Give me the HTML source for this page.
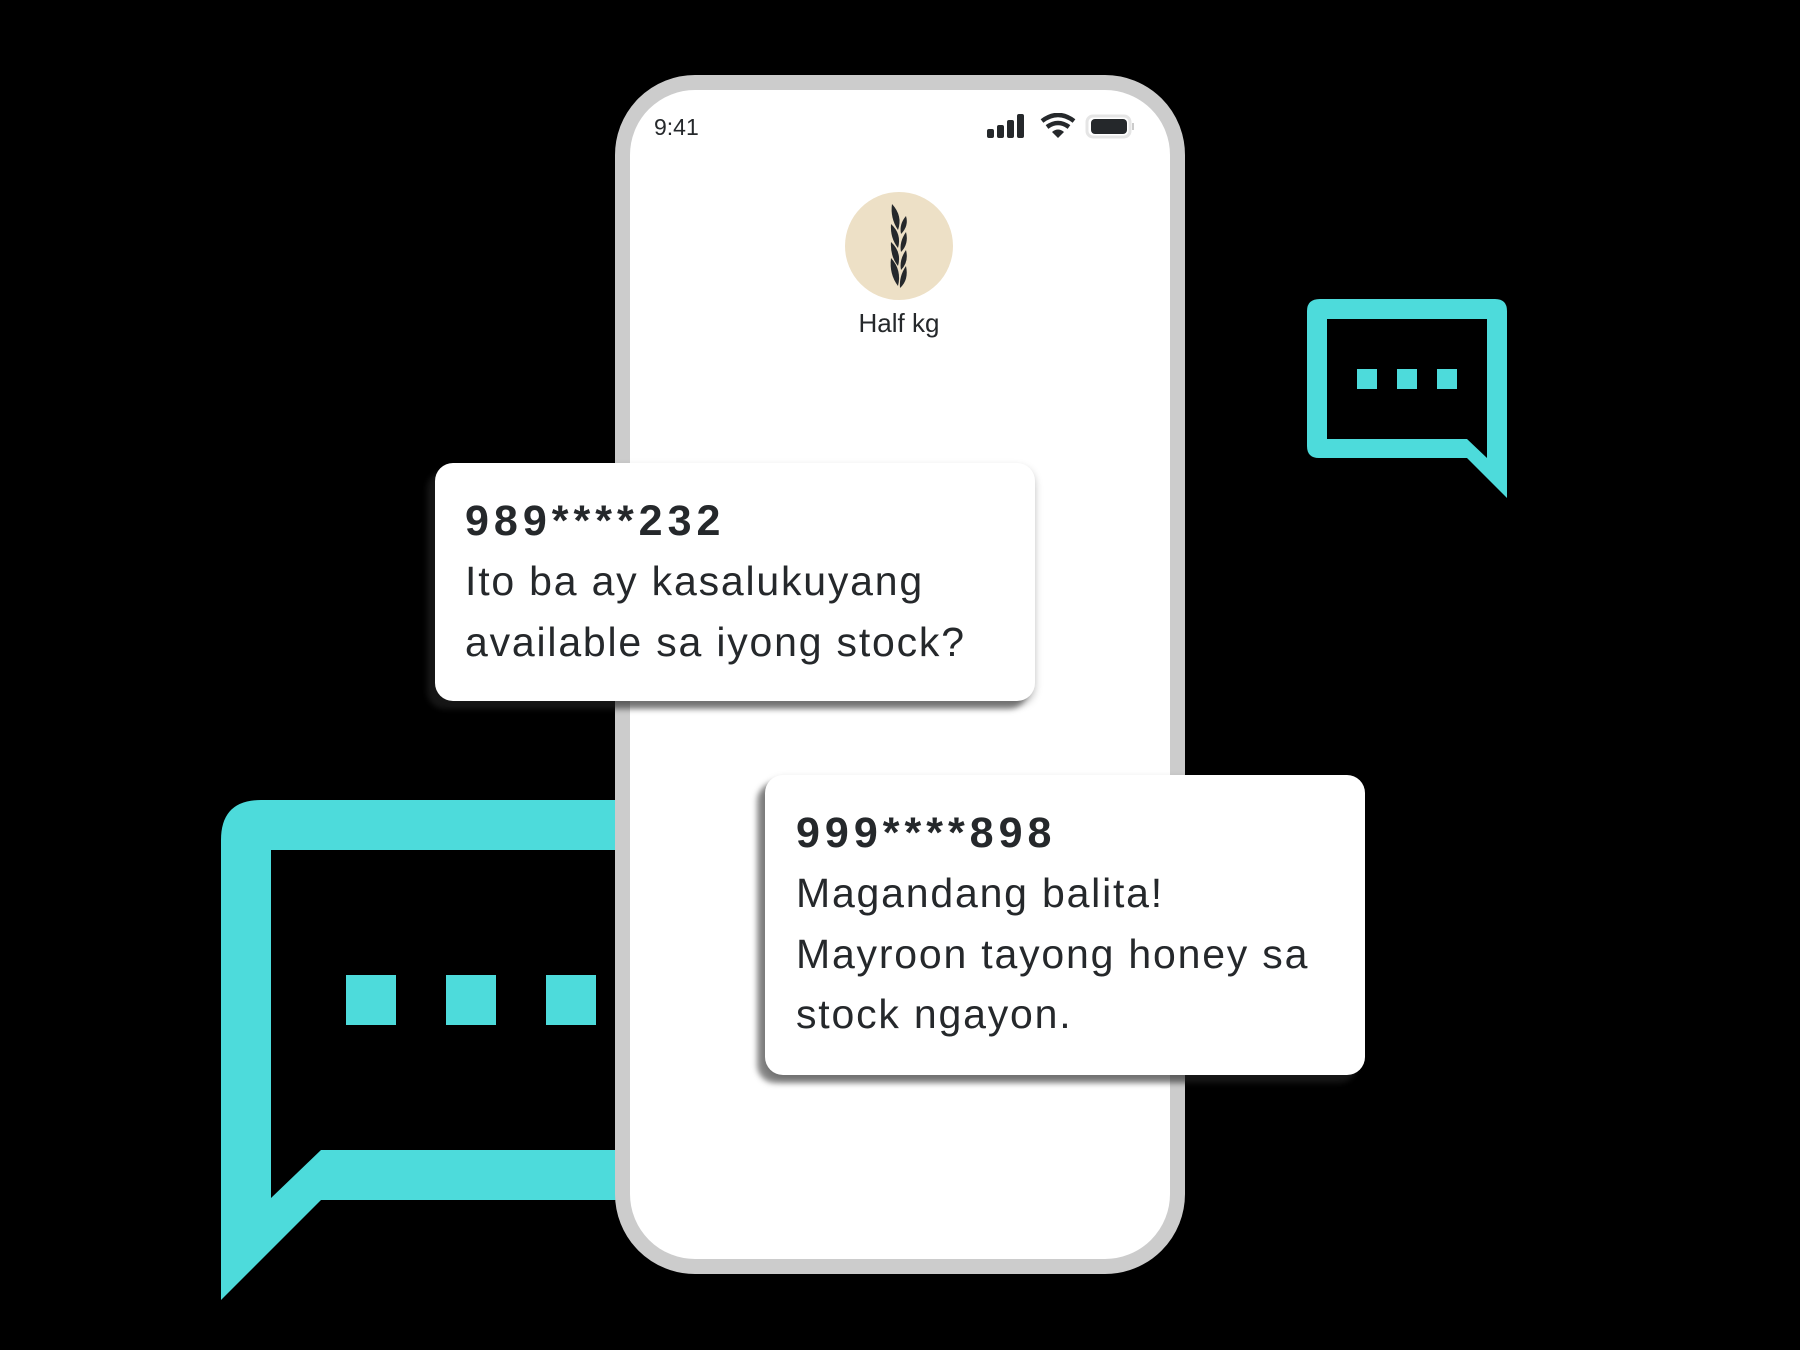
<!DOCTYPE html>
<html><head><style>
html,body{margin:0;padding:0;background:#000;width:1800px;height:1350px;overflow:hidden;position:relative;font-family:"Liberation Sans",sans-serif;}
.phone{position:absolute;left:615px;top:75px;width:540px;height:1169px;border:15px solid #cccccc;border-radius:80px;background:#fff;}
.card{position:absolute;background:#fff;border-radius:18px;box-shadow:-8px 8px 6px rgba(40,40,40,0.55),0 4px 8px rgba(0,0,0,0.25);color:#25282b;}
.card b{display:block;font-size:43px;letter-spacing:5px;line-height:60px;}
.card span{display:block;font-size:41px;line-height:60.5px;letter-spacing:1.8px;}
</style></head><body>
<svg width="1800" height="1350" style="position:absolute;left:0;top:0">
<path fill="#4ddbdb" fill-rule="evenodd" d="M221,1300 L221,840 Q221,800 261,800 L700,800 L700,1200 L321,1200 Z M271,850 L700,850 L700,1150 L321,1150 L271,1198 Z"/>
<rect x="346" y="975" width="50" height="50" fill="#4ddbdb"/>
<rect x="446" y="975" width="50" height="50" fill="#4ddbdb"/>
<rect x="546" y="975" width="50" height="50" fill="#4ddbdb"/>
<path fill="#4ddbdb" fill-rule="evenodd" d="M1320,299 L1495,299 Q1507,299 1507,311 L1507,498 L1467,458 L1319,458 Q1307,458 1307,446 L1307,311 Q1307,299 1320,299 Z M1327,319 L1487,319 L1487,458 L1467,439 L1327,439 Z"/>
<rect x="1357" y="369" width="20" height="20" fill="#4ddbdb"/>
<rect x="1397" y="369" width="20" height="20" fill="#4ddbdb"/>
<rect x="1437" y="369" width="20" height="20" fill="#4ddbdb"/>
</svg>
<div class="phone"></div>
<div style="position:absolute;left:654px;top:114px;font-size:23px;color:#25282b;">9:41</div>
<svg width="170" height="30" style="position:absolute;left:985px;top:113px">
<rect x="2" y="16" width="7" height="9" rx="2" fill="#25282b"/>
<rect x="12" y="12" width="7" height="13" rx="2" fill="#25282b"/>
<rect x="22" y="7" width="7" height="18" rx="2" fill="#25282b"/>
<rect x="32" y="1" width="7" height="24" rx="2" fill="#25282b"/>
<path d="M57,8 Q73,-4 89,8" stroke="#25282b" stroke-width="4.5" fill="none"/>
<path d="M62,14 Q73,6 84,14" stroke="#25282b" stroke-width="4.5" fill="none"/>
<path d="M67,19 L73,25 L79,19 Q73,14 67,19Z" fill="#25282b"/>
<rect x="102" y="3" width="43" height="21" rx="6" fill="none" stroke="#e5e5e5" stroke-width="3"/>
<rect x="106" y="6" width="36" height="15" rx="4" fill="#25282b"/>
<rect x="147" y="10" width="2" height="7" fill="#ccc"/>
</svg>
<svg width="110" height="110" style="position:absolute;left:845px;top:192px">
<circle cx="54" cy="54" r="54" fill="#ede0c6"/>
<g fill="#25282b">
<path d="M47,12 Q58,24 53,38 Q45,26 47,12Z"/>
<path d="M61,24 Q64,34 56,42 Q54,32 61,24Z"/>
<path d="M46,32 Q57,42 53,56 Q45,46 46,32Z"/>
<path d="M61,40 Q64,52 56,60 Q54,50 61,40Z"/>
<path d="M46,50 Q57,60 53,74 Q45,64 46,50Z"/>
<path d="M61,58 Q64,70 56,78 Q54,68 61,58Z"/>
<path d="M46,66 Q57,78 53,94 Q44,82 46,66Z"/>
<path d="M61,74 Q64,88 55,96 Q54,84 61,74Z"/>
</g>
</svg>
<div style="position:absolute;left:799px;top:308px;width:200px;text-align:center;font-size:26px;color:#25282b;">Half kg</div>
<div class="card" style="left:435px;top:463px;width:600px;height:238px;">
<div style="padding:28px 0 0 30px;"><b>989****232</b><span>Ito ba ay kasalukuyang</span><span>available sa iyong stock?</span></div></div>
<div class="card" style="left:765px;top:775px;width:600px;height:300px;">
<div style="padding:28px 0 0 31px;"><b>999****898</b><span>Magandang balita!</span><span>Mayroon tayong honey sa</span><span>stock ngayon.</span></div></div>
</body></html>
